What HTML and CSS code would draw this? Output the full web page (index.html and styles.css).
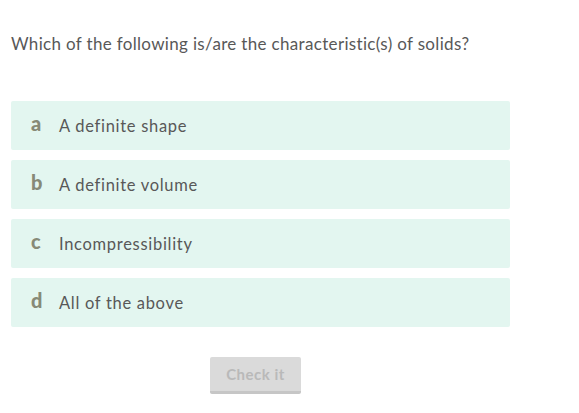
FILE: index.html
```
<!DOCTYPE html>
<html>
<head>
<meta charset="utf-8">
<link rel="stylesheet" href="styles.css">
</head>
<body>
<div class="quiz">
  <p class="question">Which of the following is/are the characteristic(s) of solids?</p>
  <div class="options">
    <div class="option"><span class="letter">a</span><span class="text">A definite shape</span></div>
    <div class="option"><span class="letter">b</span><span class="text">A definite volume</span></div>
    <div class="option"><span class="letter">c</span><span class="text">Incompressibility</span></div>
    <div class="option"><span class="letter">d</span><span class="text">All of the above</span></div>
  </div>
  <div class="actions"><button class="check">Check it</button></div>
</div>
</body>
</html>
```
FILE: styles.css
```
body {
  margin: 0;
  background: #fff;
  font-family: Lato, "Open Sans", sans-serif;
  color: #555;
}
.quiz {
  padding: 33px 11px 0 11px;
  width: 499px;
}
.question {
  margin: 0;
  font-size: 17px;
  letter-spacing: 0.33px;
  line-height: 22px;
  color: #585858;
}
.options {
  margin-top: 46px;
  display: flex;
  flex-direction: column;
  gap: 10px;
}
.option {
  height: 49px;
  background: #e3f6f0;
  border-radius: 2px;
  display: flex;
  align-items: center;
  padding-left: 20px;
}
.letter {
  width: 28px;
  font-weight: 900;
  font-size: 20px;
  color: #878a77;
  margin-top: -6px;
}
.text {
  font-size: 16.5px;
  letter-spacing: 0.7px;
  color: #585858;
  margin-top: 1px;
}
.actions {
  display: flex;
  justify-content: center;
  margin-top: 30px;
  padding-right: 10px;
}
.check {
  width: 91px;
  height: 37px;
  border: none;
  border-bottom: 3px solid #c6c6c6;
  border-radius: 2px;
  background: #dadada;
  color: #b9b9b9;
  font-family: Lato, sans-serif;
  font-weight: 700;
  font-size: 15px;
  letter-spacing: 0.5px;
  padding-bottom: 2px;
}
```
